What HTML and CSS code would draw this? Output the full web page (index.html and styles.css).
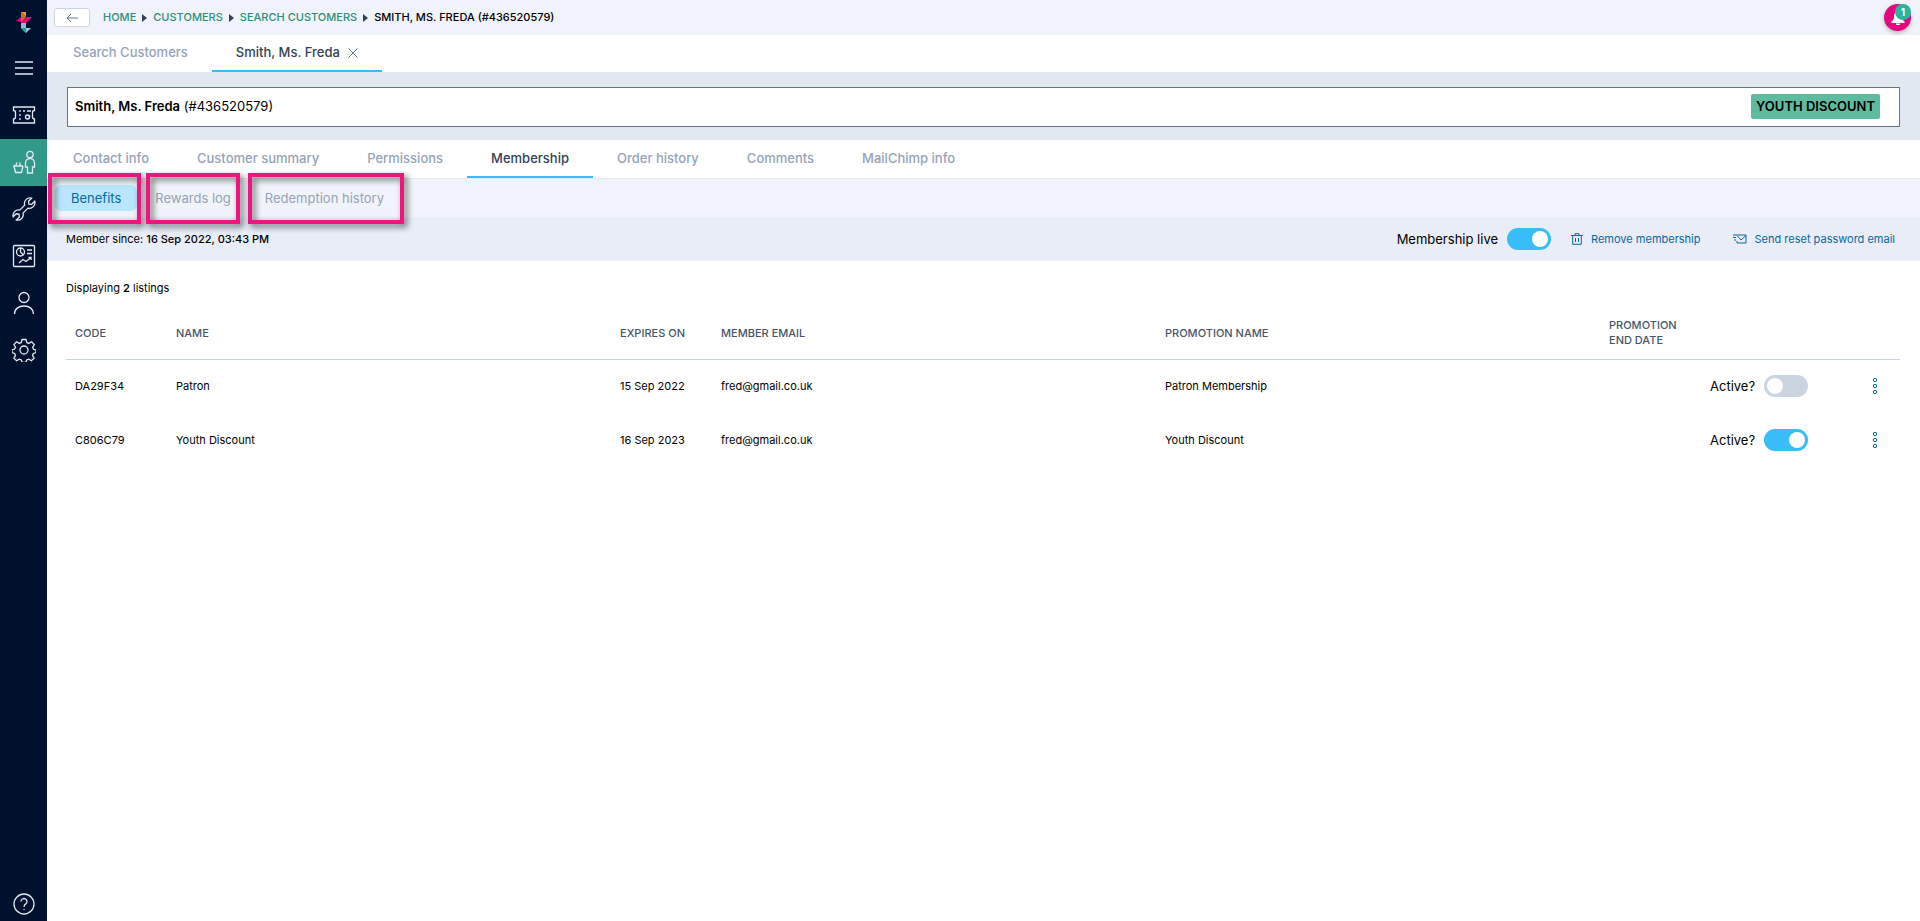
FILE: index.html
```html
<!DOCTYPE html>
<html lang="en">
<head>
  <meta charset="UTF-8" />
  <meta name="viewport" content="width=device-width, initial-scale=1.0"/>
  <title>Smith, Ms. Freda - Membership</title>
  <link rel="stylesheet" href="styles.css">
</head>
<body>

  <nav class="sidebar" aria-label="Main">
    <a class="logo" href="#" aria-label="Home">
      <svg width="16" height="22" viewBox="0 0 16 22">
        <path fill="#f39a1e" d="M5 0h5v5z"/>
        <path fill="#c9781c" d="M5 0v5h5z"/>
        <path fill="#e5077e" d="M0 9l5-4v5z"/>
        <path fill="#f0502d" d="M5 5h5l-5 6z"/>
        <path fill="#e5077e" d="M10 5h6l-6 6H5z"/>
        <path fill="#8fb9cf" d="M5 11h5v5H5z"/>
        <path fill="#b9d5e3" d="M5 16h5v5z"/>
        <path fill="#1fa58c" d="M5 16l5 5V16z"/>
        <path fill="#9cc4d6" d="M10 16h5l-5 5z"/>
      </svg>
    </a>
    <button class="nav-item" type="button" aria-label="Menu">
      <svg width="24" height="24" viewBox="0 0 24 24"><path d="M3 6h18M3 12h18M3 18h18"/></svg>
    </button>
    <a class="nav-item" href="#" aria-label="Tickets">
      <svg width="24" height="24" viewBox="0 0 24 24">
        <path d="M1.500 4h21v3.500a2 2 0 0 0-2 2v4.500a2 2 0 0 0 2 2V20h-21v-4a2 2 0 0 0 2-2V9.500a2 2 0 0 0-2-2z"/>
        <path d="M8 7v2M8 11v2M8 15v2M11 8h2M15 8h4"/>
        <circle cx="15.500" cy="14" r="2"/>
        <path d="M17.500 12v3"/>
      </svg>
    </a>
    <a class="nav-item active" href="#" aria-label="Customers">
      <svg width="24" height="24" viewBox="0 0 24 24">
        <circle cx="18" cy="4.500" r="3.200"/>
        <path d="M15.500 23v-6h-2v-4a4.500 4.500 0 0 1 9 0v4h-2v6z"/>
        <path d="M1 16h10M2 16l1.500 6.500h6L11 16M3.500 16l1.500-3.500M8.500 16L7.500 12.500"/>
      </svg>
    </a>
    <a class="nav-item" href="#" aria-label="Tools">
      <svg width="24" height="24" viewBox="0 0 24 24">
        <path d="M22.700 4.300l-3 3-2.800-.2-.4-2.900 3-3a5.500 5.500 0 0 0-6.800 6.900l-5 5a5.500 5.500 0 0 0-6.500 6.700l3-3 2.800.3.400 2.900-3 3a5.500 5.500 0 0 0 6.600-6.900l5-5a5.500 5.500 0 0 0 6.700-6.800z"/>
      </svg>
    </a>
    <a class="nav-item" href="#" aria-label="Reports">
      <svg width="24" height="24" viewBox="0 0 24 24">
        <rect x="1.500" y="1.500" width="21" height="21" rx="1"/>
        <circle cx="8.500" cy="8" r="4"/>
        <path d="M8.500 4v4l3 3M15 6h5M15 9.500h5M7 19l4-3.500 3 2 5-4M16.500 13.500H19V16"/>
      </svg>
    </a>
    <a class="nav-item" href="#" aria-label="Account">
      <svg width="24" height="24" viewBox="0 0 24 24">
        <circle cx="12" cy="6.500" r="5"/>
        <path d="M2.500 23c0-5 4-8 9.500-8s9.500 3 9.500 8"/>
      </svg>
    </a>
    <a class="nav-item" href="#" aria-label="Settings">
      <svg width="24" height="24" viewBox="0 0 24 24">
        <circle cx="12" cy="12" r="4"/>
        <path d="M10 1.500h4l.8 3 2 .9 2.800-1.600 2.700 2.800-1.600 2.700.8 2 2.500.7v2.500l-2.700 1-.8 1.900 1.600 2.700-2.700 2.700-2.700-1.600-2 .8-.9 2.500h-3.600l-.9-2.500-2-.8-2.700 1.600-2.700-2.700 1.600-2.700-.9-2-2.600-.9V12l2.600-.9.9-1.900-1.600-2.700 2.700-2.700 2.700 1.600 2-.9z"/>
      </svg>
    </a>
    <a class="nav-item help" href="#" aria-label="Help">
      <svg width="24" height="24" viewBox="0 0 24 24">
        <circle cx="12" cy="12" r="10"/>
        <path d="M9 9.500a3 3 0 1 1 4.800 2.400c-1.200.8-1.800 1.400-1.800 3M12 17v1"/>
      </svg>
    </a>
  </nav>

  <main class="content">
    <header class="topbar">
      <button class="back" type="button" aria-label="Back">
        <svg width="12" height="10" viewBox="0 0 12 10"><path d="M12 5H1M5 1L1 5l4 4"/></svg>
      </button>
      <nav class="breadcrumb" aria-label="Breadcrumb">
        <a href="#">HOME</a>
        <a href="#">CUSTOMERS</a>
        <a href="#">SEARCH CUSTOMERS</a>
        <span>SMITH, MS. FREDA (#436520579)</span>
      </nav>
      <button class="bell" type="button" aria-label="Notifications">
        <svg width="14" height="14" viewBox="0 0 14 14"><path d="M7 0a1 1 0 0 0-1 1C3.500 1.500 3 3.500 3 6c0 2-1 3.500-2.500 4.500V12h13v-1.500C12 9.500 11 8 11 6c0-2.500-.5-4.500-3-5a1 1 0 0 0-1-1zM5 12.500a2 2 0 0 0 4 0z"/></svg>
        <span class="bell-count">1</span>
      </button>
    </header>

    <nav class="tabs" aria-label="Open pages">
      <a class="tab" href="#">Search Customers</a>
      <div class="tab active">
        <a href="#">Smith, Ms. Freda</a>
        <button class="close" type="button" aria-label="Close tab">
          <svg width="10" height="10" viewBox="0 0 10 10"><path d="M.5.5l9 9M9.500.5l-9 9"/></svg>
        </button>
      </div>
    </nav>

    <section class="customer">
      <div class="customer-box">
        <div><strong>Smith, Ms. Freda</strong> (#436520579)</div>
        <span class="tag">YOUTH DISCOUNT</span>
      </div>
    </section>

    <nav class="tabs section-tabs" aria-label="Customer">
      <a class="tab" href="#">Contact info</a>
      <a class="tab" href="#">Customer summary</a>
      <a class="tab" href="#">Permissions</a>
      <a class="tab active" href="#">Membership</a>
      <a class="tab" href="#">Order history</a>
      <a class="tab" href="#">Comments</a>
      <a class="tab" href="#">MailChimp info</a>
    </nav>

    <nav class="subtabs" aria-label="Membership">
      <a class="subtab active" href="#">Benefits<span class="marker marker-wide"></span></a>
      <a class="subtab" href="#">Rewards log<span class="marker marker-narrow"></span></a>
      <a class="subtab" href="#">Redemption history<span class="marker marker-right"></span></a>
    </nav>

    <section class="member-bar">
      <div>Member since: <strong>16 Sep 2022, 03:43 PM</strong></div>
      <div class="member-actions">
        <label class="switch">Membership live <input type="checkbox" checked></label>
        <button class="action" type="button">
          <svg width="12" height="12" viewBox="0 0 12 12"><path d="M0 2.500h12M4 2V.7h4V2M1.700 3v8.300h8.600V3M4.500 5v4M7.500 5v4"/></svg>
          Remove membership
        </button>
        <button class="action" type="button">
          <svg width="14" height="12" viewBox="0 0 14 12"><path d="M0 2h4M0 4.500h3M1 7h2M4 2h9v8H4V8M4.500 3L8 7l5-4.500"/></svg>
          Send reset password email
        </button>
      </div>
    </section>

    <section class="listings">
      <p>Displaying <strong>2</strong> listings</p>
      <table>
        <colgroup>
          <col class="col-small"><col><col class="col-small"><col><col><col class="col-small"><col class="col-switch"><col class="col-menu">
        </colgroup>
        <thead>
          <tr>
            <th>CODE</th>
            <th>NAME</th>
            <th>EXPIRES ON</th>
            <th>MEMBER EMAIL</th>
            <th>PROMOTION NAME</th>
            <th>PROMOTION END DATE</th>
            <th></th>
            <th></th>
          </tr>
        </thead>
        <tbody>
          <tr>
            <td>DA29F34</td>
            <td>Patron</td>
            <td>15 Sep 2022</td>
            <td>fred@gmail.co.uk</td>
            <td>Patron Membership</td>
            <td></td>
            <td><label class="switch">Active? <input type="checkbox"></label></td>
            <td class="row-menu">
              <button type="button" aria-label="Patron options">
                <svg width="6" height="18" viewBox="0 0 6 18"><circle cx="3" cy="3" r="1.700"/><circle cx="3" cy="9" r="1.700"/><circle cx="3" cy="15" r="1.700"/></svg>
              </button>
            </td>
          </tr>
          <tr>
            <td>C806C79</td>
            <td>Youth Discount</td>
            <td>16 Sep 2023</td>
            <td>fred@gmail.co.uk</td>
            <td>Youth Discount</td>
            <td></td>
            <td><label class="switch">Active? <input type="checkbox" checked></label></td>
            <td class="row-menu">
              <button type="button" aria-label="Youth Discount options">
                <svg width="6" height="18" viewBox="0 0 6 18"><circle cx="3" cy="3" r="1.700"/><circle cx="3" cy="9" r="1.700"/><circle cx="3" cy="15" r="1.700"/></svg>
              </button>
            </td>
          </tr>
        </tbody>
      </table>
    </section>
  </main>

</body>
</html>
```
FILE: styles.css
```css
* {
  box-sizing: border-box;
}

body {
  margin: 0;
  min-height: 100vh;
  display: flex;
  background: #fff;
  font-family: Inter, "Liberation Sans", sans-serif;
  font-size: 11px;
  line-height: 15px;
  color: #000;
}

a {
  color: inherit;
  text-decoration: none;
}

button {
  font: inherit;
  color: inherit;
  background: none;
  border: none;
  padding: 0;
  cursor: pointer;
}

svg {
  display: block;
  fill: none;
  stroke: currentColor;
}

strong {
  font-weight: 600;
}

/* sidebar */
.sidebar {
  width: 47px;
  flex: none;
  display: flex;
  flex-direction: column;
  background: #00112e;
  color: #e2e8f0;
}

.logo {
  height: 45px;
  display: flex;
  align-items: center;
  justify-content: center;
}

.logo svg {
  stroke: none;
}

.nav-item {
  height: 47px;
  padding-bottom: 2px;
  display: flex;
  align-items: center;
  justify-content: center;
}

.nav-item svg {
  stroke-width: 1.3;
}

.nav-item.active {
  background: #319988;
}

.help {
  height: 32px;
  margin-top: auto;
}

/* main column */
.content {
  flex: 1;
  min-width: 0;
}

.topbar {
  height: 35px;
  padding: 0 9px 0 7px;
  display: flex;
  align-items: center;
  background: #f0f3f9;
}

.back {
  width: 36px;
  height: 19px;
  display: flex;
  align-items: center;
  justify-content: center;
  background: #fff;
  border: 1px solid #cbd5e1;
  border-radius: 3px;
  color: #64748b;
}

.breadcrumb {
  flex: 1;
  margin-left: 13px;
  display: flex;
  align-items: center;
  font-weight: 500;
}

.breadcrumb a {
  display: flex;
  align-items: center;
  color: #2f8f7c;
}

.breadcrumb a::after {
  content: "";
  margin: 0 6px;
  border-style: solid;
  border-width: 4px 0 4px 5px;
  border-color: transparent transparent transparent #334155;
}

.bell {
  position: relative;
  width: 27px;
  height: 27px;
  display: flex;
  align-items: center;
  justify-content: center;
  border-radius: 50%;
  background: #e5077e;
  box-shadow: 0 2px 4px rgba(0, 0, 0, 0.25);
}

.bell svg {
  fill: #fff;
  stroke: none;
}

.bell-count {
  position: absolute;
  top: 0;
  right: 0;
  width: 16px;
  height: 16px;
  border-radius: 50%;
  background: #2bb39b;
  color: #fff;
  font-size: 10px;
  font-weight: 700;
  line-height: 16px;
}

.tabs {
  height: 37px;
  padding-left: 2px;
  display: flex;
  font-size: 13px;
  font-weight: 500;
  color: #94a3b8;
}

.tab {
  padding: 0 24px;
  display: flex;
  align-items: center;
  border-bottom: 2px solid transparent;
}

.tab.active {
  color: #334155;
  border-bottom-color: #38bdf8;
}

.close {
  margin-left: 8px;
  color: #64748b;
}

.section-tabs {
  height: 39px;
  border-bottom: 1px solid #e2e8f0;
}

.customer {
  padding: 15px 20px 13px;
  background: #e2e8f0;
}

.customer-box {
  height: 40px;
  padding: 0 19px 2px 7px;
  display: flex;
  align-items: center;
  justify-content: space-between;
  background: #fff;
  border: 1px solid #64748b;
  font-size: 13px;
}

.tag {
  padding: 5px;
  border-radius: 2px;
  background: #5fbb9f;
  font-weight: 600;
}

.subtabs {
  height: 38px;
  padding-left: 8px;
  display: flex;
  align-items: center;
  gap: 2px;
  background: #f0f3f9;
  font-size: 13px;
  color: #94a3b8;
}

.subtab {
  position: relative;
  padding: 6px 16px 5px;
  border-radius: 6px;
}

.subtab.active {
  background: #bae6fd;
  color: #0369a1;
}

/* pink frames drawn over the sub tabs */
.marker {
  position: absolute;
  z-index: 1;
  top: -12px;
  bottom: -13px;
  border: 4px solid #f0147f;
  filter: drop-shadow(3px 3px 3px rgba(0, 0, 0, 0.6));
  pointer-events: none;
}

.marker-wide {
  left: -7px;
  right: -4px;
}

.marker-narrow {
  left: 7px;
  right: 7px;
}

.marker-right {
  left: -1px;
  right: -4px;
}

.member-bar {
  height: 44px;
  padding: 0 25px 0 19px;
  display: flex;
  align-items: center;
  justify-content: space-between;
  background: #e9edf7;
}

.member-bar strong {
  font-weight: 500;
}

.member-actions {
  display: flex;
  align-items: center;
}

.switch {
  display: flex;
  align-items: center;
  gap: 9px;
  font-size: 13px;
}

.switch input {
  appearance: none;
  flex: none;
  width: 44px;
  height: 22px;
  margin: 0;
  padding: 3px;
  display: flex;
  border-radius: 11px;
  background: #cbd5e1;
  cursor: pointer;
}

.switch input::before {
  content: "";
  width: 16px;
  height: 16px;
  border-radius: 50%;
  background: #fff;
}

.switch input:checked {
  justify-content: flex-end;
  background: #38bdf8;
}

.action {
  margin-left: 20px;
  display: flex;
  align-items: center;
  gap: 8px;
  color: #0369a1;
}

.action + .action {
  margin-left: 32px;
}

.listings {
  padding: 20px 20px 0 19px;
}

.listings p {
  margin: 0 0 12px;
}

table {
  width: 100%;
  table-layout: fixed;
  border-collapse: collapse;
}

.col-small {
  width: 101px;
}

.col-switch {
  width: 149px;
}

.col-menu {
  width: 50px;
}

th {
  height: 51px;
  padding: 0 9px;
  border-bottom: 1px solid #cbd5e1;
  color: #475569;
  font-weight: 500;
  text-align: left;
}

td {
  height: 54px;
  padding: 0 9px;
  white-space: nowrap;
}

.row-menu button {
  margin: 0 auto;
  display: block;
  color: #0369a1;
}
```
